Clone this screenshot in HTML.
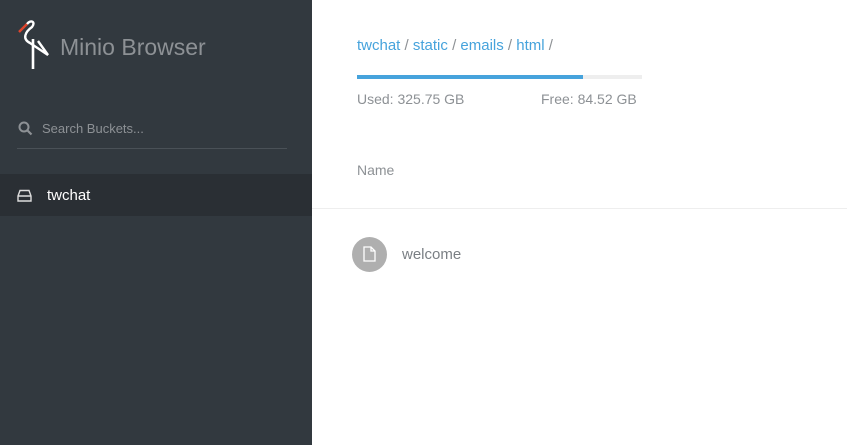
<!DOCTYPE html>
<html><head><style>
body{margin:0;width:847px;height:445px;font-family:"Liberation Sans",sans-serif;background:#fff;position:relative;overflow:hidden}
.side{position:absolute;left:0;top:0;width:312px;height:445px;background:#32393f}
.abs{position:absolute}
</style></head><body>
<div class="side">
<svg class="abs" style="left:16px;top:17px" width="36" height="54" viewBox="0 0 36 54">
<path d="M3 15 L11 7" stroke="#e0452c" stroke-width="2.5"/>
<path d="M11 7 C15 2 20 5 16 10 C9 15 6 22 14 26 L32 38 L22 24" stroke="#fff" stroke-width="2.4" fill="none"/>
<path d="M17 22 L17 52" stroke="#fff" stroke-width="2.6"/>
</svg>
<div class="abs" style="left:60px;top:34px;font-size:23px;color:#8d9195">Minio Browser</div>
<svg class="abs" style="left:18px;top:121px" width="15" height="15" viewBox="0 0 15 15"><circle cx="6" cy="6" r="4.5" stroke="#8d9195" stroke-width="2" fill="none"/><path d="M9.5 9.5 L13.5 13.5" stroke="#8d9195" stroke-width="2.2"/></svg>
<div class="abs" style="left:42px;top:121px;font-size:13px;color:#8d9195">Search Buckets...</div>
<div class="abs" style="left:17px;top:148px;width:270px;height:1px;background:#4a5157"></div>
<div class="abs" style="left:0;top:174px;width:312px;height:42px;background:#2a2f34"></div>
<svg class="abs" style="left:17px;top:189px" width="15" height="13" viewBox="0 0 15 13"><path d="M1 7 L3 1.5 H12 L14 7 V12 H1 Z M1 7 H14" stroke="#ddd" stroke-width="1.4" fill="none"/></svg>
<div class="abs" style="left:47px;top:187px;font-size:15px;color:#fff">twchat</div>
</div>
<div class="abs" style="left:357px;top:37px;font-size:15px;color:#46a3dc">twchat <span style="color:#8d9195">/</span> static <span style="color:#8d9195">/</span> emails <span style="color:#8d9195">/</span> html <span style="color:#8d9195">/</span></div>
<div class="abs" style="left:357px;top:75px;width:285px;height:4px;background:#eee"></div>
<div class="abs" style="left:357px;top:75px;width:226px;height:4px;background:#46a3dc"></div>
<div class="abs" style="left:357px;top:91px;font-size:14px;color:#8d9195">Used: 325.75 GB</div>
<div class="abs" style="left:541px;top:91px;font-size:14px;color:#8d9195">Free: 84.52 GB</div>
<div class="abs" style="left:357px;top:162px;font-size:14px;color:#8d9195">Name</div>
<div class="abs" style="left:312px;top:208px;width:535px;height:1px;background:#eee"></div>
<div class="abs" style="left:352px;top:237px;width:35px;height:35px;border-radius:50%;background:#afafaf"></div>
<svg class="abs" style="left:363px;top:246px" width="13" height="16" viewBox="0 0 13 16"><path d="M1 1 H8 L12 5 V15 H1 Z M8 1 V5 H12" stroke="#fff" stroke-width="1.3" fill="none"/></svg>
<div class="abs" style="left:402px;top:246px;font-size:15px;color:#7a7f84">welcome</div>
</body></html>
